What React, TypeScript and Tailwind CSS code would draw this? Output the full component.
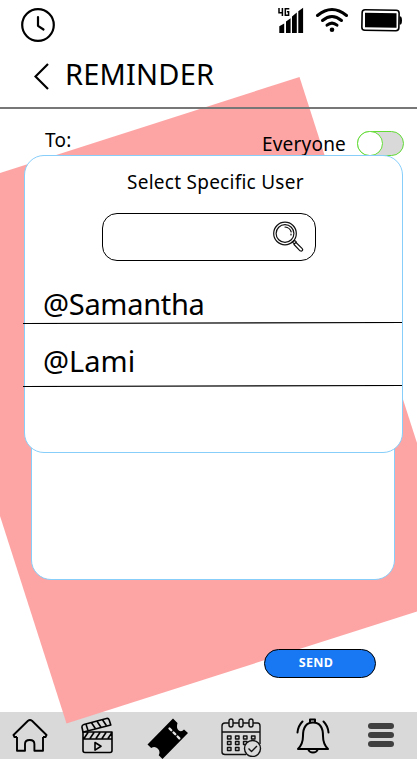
import React from "react";

function ClockIcon() {
  return (
    <svg width="34" height="34" viewBox="0 0 34 34" fill="none" stroke="#000" strokeWidth="2.2" strokeLinecap="round" strokeLinejoin="round">
      <circle cx="17" cy="17" r="15.8" />
      <path d="M17 9v8.8l5.5 3.7" />
    </svg>
  );
}

function StatusIcons() {
  return (
    <svg className="mt-1" width="140" height="34" viewBox="277 4 140 34">
      <g fill="none" stroke="#000" strokeWidth="1.5">
        <path d="M279 8v4.7h4M282.4 8v8M289.3 8.8h-4v6.4h3.3v-3.4h-1.7" />
      </g>
      <path d="M279.3 33v-6.7l4.9-2.700V33zM286 33V21.500l4.600-3.300V33zM292 33V16.500l4.800-3.900V33zM298.300 33V11.300l4.800-3.500V33z" />
      <g fill="none" stroke="#000" strokeWidth="3" strokeLinecap="round">
        <path d="M317.5 15.5Q332 3.5 346.500 15.500" />
        <path d="M322.500 20.500Q332 12.500 341.500 20.500" />
        <path d="M327 25.200Q332 21 337 25.200" />
      </g>
      <circle cx="332" cy="29.800" r="2.300" />
      <rect x="362" y="10" width="37" height="20.500" rx="3" fill="#fff" stroke="#000" strokeWidth="1.600" transform="rotate(1 380 20)" />
      <path d="M365 12.800l31.500.5v14.500l-31.500-.5zM399.500 16.500h1.500q1 1 1 4t-1 4h-1.500z" />
    </svg>
  );
}

function SearchIcon() {
  return (
    <svg width="32" height="32" viewBox="0 0 32 32" fill="none" stroke="#111" strokeWidth="1.200" strokeLinecap="round">
      <circle cx="13" cy="12.500" r="11.300" />
      <circle cx="13" cy="12.500" r="8.900" />
      <path d="M13 6q5 .5 6.200 5M19 13v1M20.300 21l2.200-1.800 1.800 1.700-1.900 2zM22 23.500l6 6.300q1.600.7 2.300-.3.900-1-.3-2.200l-6-5.800" />
    </svg>
  );
}

function HomeIcon() {
  return (
    <svg width="36" height="34" viewBox="0 0 36 34" fill="none" stroke="#000" strokeWidth="1.900" strokeLinejoin="round">
      <path d="M5 18v13.800h8V25q0-4 4.700-4t4.700 4v6.800H31V18M5 18H2.500l-1-2L16 1.800q2-1.500 4 0L34.500 16l-1 2H31" />
    </svg>
  );
}

function ClapperIcon() {
  return (
    <svg width="34" height="38" viewBox="0 0 34 38" fill="none" stroke="#000" strokeWidth="1.600" strokeLinejoin="round">
      <path d="M2 15h29v18.500q0 2-2 2H4q-2 0-2-2zM2 22h29M3 21.500l4-6M9 21.500l4-6M15 21.500l4-6M21 21.500l4-6M27 21.500l4-6" />
      <path d="M2 15 .9 10q0-2 2-2.500L25.500 1.500q2-.5 2.700 1.500l1.600 5L3.500 14.800z" />
      <path d="m5 7.300 2 6.200M10.500 5.800l4 5.900M16 4.200l4 6M21.500 2.800l4 6M14 25.500l6 3.800-6 3.800z" />
    </svg>
  );
}

function TicketIcon() {
  return (
    <svg width="41" height="42" viewBox="0 0 41 42">
      <path d="M.5 27.500 26 1.500l4.500 4.500q-1.500 5 1 7.300 3 2.200 5.500-.8l4 3.500-25.500 26-3.800-3.700q2-3.500-.8-6.600-3-2.800-6.700-.7z" />
      <path d="m22.500 11.500 10.500 10.500" stroke="#e5e5e5" strokeWidth="2.300" strokeDasharray="2.500 3.200" strokeLinecap="round" />
    </svg>
  );
}

function CalendarIcon() {
  return (
    <svg width="41" height="39" viewBox="0 0 41 39" fill="none" stroke="#111" strokeWidth="1.400" strokeLinejoin="round">
      <path d="M8 5H4Q1 5 1 8v26q0 2.500 3 2.500h21M32 5h4.500Q39 5 39 8v18M1 14h38M12 5h6M22 5h6" />
      <rect x="8" y="1" width="4" height="8" rx="2" /><rect x="18" y="1" width="4" height="8" rx="2" /><rect x="28" y="1" width="4" height="8" rx="2" />
      <path d="M6.500 18h3.500v3h-3.500zM14.500 18h3.500v3h-3.500zM22.500 18h3.500v3h-3.500zM30.500 18h3.500v3h-3.500zM6.500 23.500h3.500v3h-3.500zM14.500 23.500h3.500v3h-3.500zM22.500 23.500h3.500v3h-3.500zM6.500 29.500h3.500v3h-3.500zM14.500 29.500h3.500v3h-3.500z" />
      <circle cx="31.500" cy="30.500" r="8" fill="#d9d9d9" />
      <path d="m27.500 30.500 3 3 5.500-5.500" />
    </svg>
  );
}

function BellIcon() {
  return (
    <svg width="34" height="36" viewBox="0 0 34 36" fill="none" stroke="#000" strokeWidth="2" strokeLinejoin="round" strokeLinecap="round">
      <path d="M14 4V1.500h5V4M2 31q5-5 5-13 0-13.500 10-13.500T27 18q0 8 5 13zM12.500 32q1 2.500 4.500 2.500t4.500-2.500M6.500 3.500Q2 8 1.500 14.500M27.500 3.500q4.500 4.500 5 11" />
    </svg>
  );
}

function UserRow({ children, className }: { children: React.ReactNode; className: string }) {
  return (
    <div className={"-ml-0.5 flex flex-col " + className}>
      <div className="grow pl-5 text-[29px] leading-8">{children}</div>
      <svg className="block" width="379" height="2" viewBox="0 0 379 2">
        <path d="M0 1.500 379 .500" stroke="#000" strokeWidth="1.100" />
      </svg>
    </div>
  );
}

export default function App() {
  return (
    <div className="relative isolate flex h-[759px] w-[417px] flex-col overflow-hidden bg-white font-['Noto_Sans',sans-serif] text-black">
      <svg className="pointer-events-none absolute inset-0 -z-10" width="417" height="759" viewBox="0 0 417 759">
        <path d="M0 712h417v47H0z" fill="#d9d9d9" />
        <path d="M-45 187.500 299.500 77 417 443v168.500L66.500 723.500 0 516z" fill="#fda5a5" />
      </svg>

      <div className="flex h-[45px] shrink-0 justify-between pl-[21px]">
        <div className="pt-2"><ClockIcon /></div>
        <StatusIcons />
      </div>

      <header className="flex h-16 shrink-0 items-center border-b-2 border-[#777] pl-[35px]">
        <svg className="-ml-px" width="15" height="27" viewBox="0 0 15 27" fill="none" stroke="#000" strokeWidth="2.200">
          <path d="M14 1 1.500 13.500 14 26" />
        </svg>
        <h1 className="-mt-1 ml-[16px] text-[29px] leading-9 tracking-[0.2px]">REMINDER</h1>
      </header>

      <div className="flex h-[46px] shrink-0 justify-between pr-[13px] pl-[45px]">
        <span className="pt-[17px] text-[19px] leading-7 tracking-[0.3px]">To:</span>
        <div className="flex">
          <span className="pt-[21px] text-[19px] leading-7 tracking-[0.2px]">Everyone</span>
          <div className="mt-[22px] ml-[11px] h-[25px] w-[47px] rounded-full border border-[#62dc35] bg-[#d9d9d9]">
            <div className="-mt-px -ml-px h-[25px] w-[26px] rounded-full border border-[#62dc35] bg-white" />
          </div>
        </div>
      </div>

      <section className="relative z-10 ml-6 h-[298px] w-[379px] shrink-0 rounded-[20px] border border-[#87cefa] bg-white">
        <h2 className="pt-3 pl-[102px] text-[19px] leading-7 tracking-[0.26px]">Select Specific User</h2>
        <div className="mt-[17px] ml-[77px] flex h-12 w-[214px] justify-end rounded-[15px] border border-black pt-[7px] pr-[11px]">
          <SearchIcon />
        </div>
        <UserRow className="h-[63px] pt-[27px] tracking-[-0.3px]">@Samantha</UserRow>
        <UserRow className="h-[63px] pt-[21px]">@Lami</UserRow>
      </section>

      <div className="-mt-5 ml-[31px] h-[147px] w-[364px] shrink-0 rounded-b-[20px] border border-[#87cefa] bg-white" />

      <button className="mt-[69px] ml-[264px] h-[29px] w-28 shrink-0 rounded-full border border-black bg-[#1877f2] pr-2 text-[12.500px] leading-none font-bold tracking-[0.3px] text-white">SEND</button>

      <nav className="mt-auto flex h-[47px] shrink-0 pl-3">
        <div className="w-[69px] pt-[7px]"><HomeIcon /></div>
        <div className="w-[66px] pt-[5px]"><ClapperIcon /></div>
        <div className="w-[74px] pt-[5px]"><TicketIcon /></div>
        <div className="w-[75px] pt-[6px]"><CalendarIcon /></div>
        <div className="w-[72px] pt-[6px]"><BellIcon /></div>
        <div className="flex flex-col gap-[3px] pt-[11px]">
          <span className="h-1.5 w-[26px] rounded-sm bg-[#404040]" />
          <span className="h-1.5 w-[26px] rounded-sm bg-[#404040]" />
          <span className="h-1.5 w-[26px] rounded-sm bg-[#404040]" />
        </div>
      </nav>
    </div>
  );
}
